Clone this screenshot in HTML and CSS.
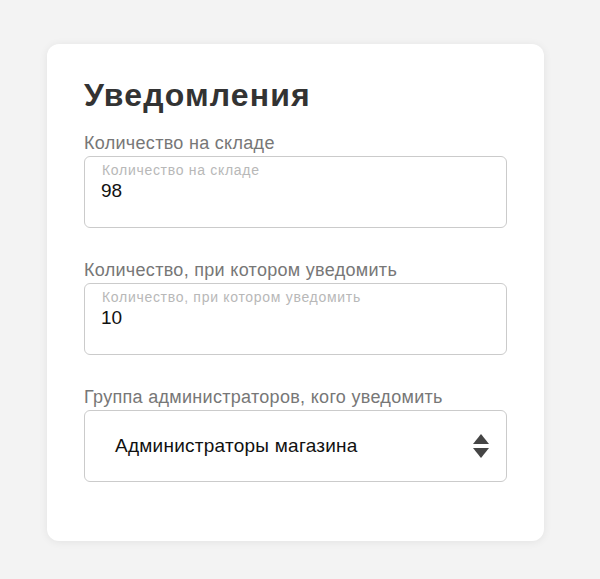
FILE: index.html
```html
<!DOCTYPE html>
<html lang="ru">
<head>
<meta charset="utf-8">
<title>Уведомления</title>
<link rel="stylesheet" href="styles.css">
</head>
<body>
<div class="card">
  <h1 class="title">Уведомления</h1>
  <div class="field">
    <div class="label">Количество на складе</div>
    <div class="box">
      <div class="hint">Количество на складе</div>
      <div class="value">98</div>
    </div>
  </div>
  <div class="field">
    <div class="label">Количество, при котором уведомить</div>
    <div class="box">
      <div class="hint">Количество, при котором уведомить</div>
      <div class="value">10</div>
    </div>
  </div>
  <div class="field">
    <div class="label">Группа администраторов, кого уведомить</div>
    <div class="box select">
      <div class="select-text">Администраторы магазина</div>
      <svg class="arrows" width="16" height="25" viewBox="0 0 16 25">
        <polygon points="8,0 16,10 0,10" fill="#454545"/>
        <polygon points="0,14 16,14 8,24" fill="#454545"/>
      </svg>
    </div>
  </div>
</div>
</body>
</html>
```
FILE: styles.css
```css
html, body {
  margin: 0;
  padding: 0;
}
body {
  background: #f3f3f3;
  font-family: "Liberation Sans", Arial, sans-serif;
  width: 600px;
  height: 579px;
  overflow: hidden;
}
.card {
  box-sizing: border-box;
  margin: 44px 0 0 47px;
  width: 497px;
  height: 497px;
  background: #fff;
  border-radius: 12px;
  box-shadow: 0 1px 8px rgba(0,0,0,0.07);
  padding: 33px 37px 0 37px;
}
.title {
  margin: 0;
  font-size: 32px;
  line-height: 36px;
  font-weight: bold;
  letter-spacing: 1.15px;
  color: #333;
}
.field {
  margin-top: 20px;
}
.field + .field {
  margin-top: 32px;
}
.label {
  font-size: 18px;
  line-height: 20px;
  letter-spacing: 0.3px;
  color: #777;
  margin-bottom: 3px;
}
.box {
  box-sizing: border-box;
  height: 72px;
  border: 1px solid #cbcbcb;
  border-radius: 6px;
  padding: 5px 16px 0 16px;
}
.hint {
  font-size: 14px;
  line-height: 16px;
  letter-spacing: 0.7px;
  color: #b8b8b8;
  padding-left: 1px;
}
.value {
  font-size: 19px;
  line-height: 22px;
  color: #111;
  margin-top: 2px;
}
.select {
  display: flex;
  align-items: center;
  justify-content: space-between;
  padding: 0 17px 0 30px;
}
.select-text {
  font-size: 19px;
  letter-spacing: 0.25px;
  color: #111;
}
.arrows {
  display: block;
}
```
